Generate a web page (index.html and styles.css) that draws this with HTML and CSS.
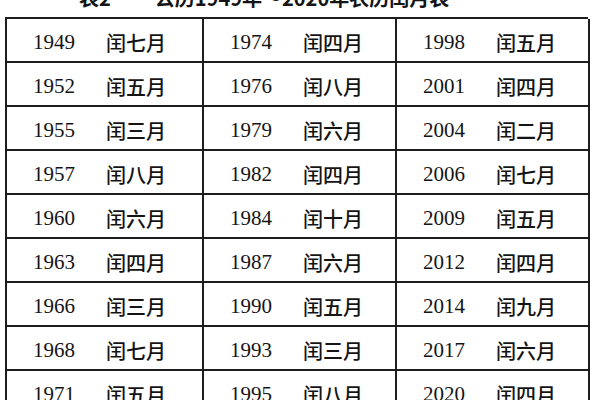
FILE: index.html
```html
<!DOCTYPE html>
<html lang="zh">
<head>
<meta charset="utf-8">
<link rel="stylesheet" href="styles.css">
</head>
<body>
<div class="page">
  <div class="title"><span class="tno">表2</span><span class="tname">公历1949年～2020年农历闰月表</span></div>
  <div class="table">
    <div class="cell"><span class="yr">1949</span><span class="mo">闰七月</span></div>
    <div class="cell"><span class="yr">1974</span><span class="mo">闰四月</span></div>
    <div class="cell"><span class="yr">1998</span><span class="mo">闰五月</span></div>

    <div class="cell"><span class="yr">1952</span><span class="mo">闰五月</span></div>
    <div class="cell"><span class="yr">1976</span><span class="mo">闰八月</span></div>
    <div class="cell"><span class="yr">2001</span><span class="mo">闰四月</span></div>

    <div class="cell"><span class="yr">1955</span><span class="mo">闰三月</span></div>
    <div class="cell"><span class="yr">1979</span><span class="mo">闰六月</span></div>
    <div class="cell"><span class="yr">2004</span><span class="mo">闰二月</span></div>

    <div class="cell"><span class="yr">1957</span><span class="mo">闰八月</span></div>
    <div class="cell"><span class="yr">1982</span><span class="mo">闰四月</span></div>
    <div class="cell"><span class="yr">2006</span><span class="mo">闰七月</span></div>

    <div class="cell"><span class="yr">1960</span><span class="mo">闰六月</span></div>
    <div class="cell"><span class="yr">1984</span><span class="mo">闰十月</span></div>
    <div class="cell"><span class="yr">2009</span><span class="mo">闰五月</span></div>

    <div class="cell"><span class="yr">1963</span><span class="mo">闰四月</span></div>
    <div class="cell"><span class="yr">1987</span><span class="mo">闰六月</span></div>
    <div class="cell"><span class="yr">2012</span><span class="mo">闰四月</span></div>

    <div class="cell"><span class="yr">1966</span><span class="mo">闰三月</span></div>
    <div class="cell"><span class="yr">1990</span><span class="mo">闰五月</span></div>
    <div class="cell"><span class="yr">2014</span><span class="mo">闰九月</span></div>

    <div class="cell"><span class="yr">1968</span><span class="mo">闰七月</span></div>
    <div class="cell"><span class="yr">1993</span><span class="mo">闰三月</span></div>
    <div class="cell"><span class="yr">2017</span><span class="mo">闰六月</span></div>

    <div class="cell"><span class="yr">1971</span><span class="mo">闰五月</span></div>
    <div class="cell"><span class="yr">1995</span><span class="mo">闰八月</span></div>
    <div class="cell"><span class="yr">2020</span><span class="mo">闰四月</span></div>
  </div>
</div>
</body>
</html>
```
FILE: styles.css
```css
html, body {
  margin: 0;
  padding: 0;
  background: #ffffff;
  overflow: hidden;
}
.page {
  width: 600px;
  height: 400px;
  overflow: hidden;
  padding-left: 5px;
  box-sizing: border-box;
  color: #141414;
}
.title {
  height: 20px;
  line-height: 20px;
  margin-top: -12px;
  margin-bottom: 9px;
  padding-left: 74px;
  font-family: "Noto Sans CJK SC", "Liberation Serif", sans-serif;
  font-weight: 700;
  font-size: 20px;
  white-space: nowrap;
  display: flex;
  gap: 44px;
}
.table {
  display: grid;
  grid-template-columns: 197px 193px 193px;
  grid-auto-rows: 44px;
  border-left: 2px solid #1e1e1e;
  border-top: 2px solid #1e1e1e;
  width: 583px;
  box-sizing: border-box;
}
.cell {
  border-right: 2px solid #1e1e1e;
  border-bottom: 2px solid #1e1e1e;
  display: flex;
  align-items: center;
  padding-left: 26px;
  padding-top: 5px;
  gap: 31px;
  white-space: nowrap;
}
.yr {
  font-family: "Liberation Serif", serif;
  font-size: 21px;
}
.mo {
  font-family: "Noto Sans CJK SC", sans-serif;
  font-size: 20px;
  font-weight: 500;
  line-height: 1;
}
```
